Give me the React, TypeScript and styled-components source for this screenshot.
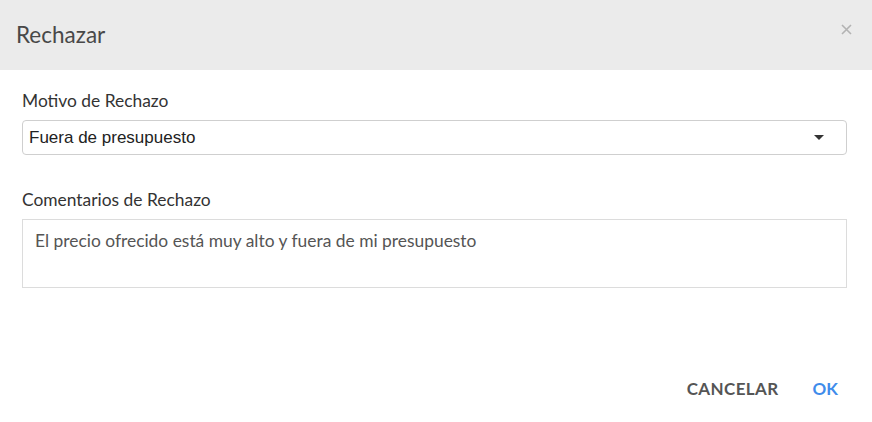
import React from "react";
import styled, { createGlobalStyle } from "styled-components";

const GlobalStyle = createGlobalStyle`
  html, body {
    margin: 0;
    padding: 0;
    background: #ffffff;
  }
  body {
    font-family: Lato, "Open Sans", sans-serif;
  }
`;

const Dialog = styled.div`
  width: 872px;
  height: 422px;
  display: flex;
  flex-flow: column nowrap;
  background: #ffffff;
`;

const Header = styled.div`
  height: 70px;
  display: flex;
  align-items: center;
  justify-content: space-between;
  padding: 0 20px 0 16px;
  background: #ebebeb;
  box-sizing: border-box;
`;

const Title = styled.h2`
  margin: -2px 0 0;
  font-family: Lato, sans-serif;
  font-size: 22.5px;
  font-weight: 400;
  color: #484848;
`;

const Close = styled.button`
  border: 0;
  background: none;
  padding: 0;
  margin-top: -12px;
  display: flex;
  cursor: pointer;
`;

const Body = styled.div`
  flex: 1;
  display: flex;
  flex-flow: column nowrap;
  padding: 21px 25px 0 22px;
`;

const Field = styled.div`
  display: flex;
  flex-flow: column nowrap;
  gap: 9px;
  margin-bottom: 34px;

  & + & {
    margin-top: 1px;
  }
`;

const Label = styled.label`
  font-family: Lato, sans-serif;
  font-size: 17.4px;
  color: #333333;
  line-height: 20px;
`;

const Select = styled.div`
  height: 35px;
  box-sizing: border-box;
  border: 1px solid #cfcfcf;
  border-radius: 4px;
  display: flex;
  align-items: center;
  justify-content: space-between;
  padding: 0 22px 0 6px;
  font-family: "Liberation Sans", Arial, sans-serif;
  font-size: 17px;
  color: #222222;
`;

const Caret = styled.span`
  width: 0;
  height: 0;
  border-left: 5px solid transparent;
  border-right: 5px solid transparent;
  border-top: 5px solid #333333;
`;

const TextArea = styled.div`
  height: 69px;
  box-sizing: border-box;
  border: 1px solid #dcdcdc;
  padding: 11px 12px;
  font-family: Lato, sans-serif;
  font-size: 17.4px;
  color: #555555;
  line-height: 20px;
`;

const Footer = styled.div`
  display: flex;
  justify-content: flex-end;
  align-items: center;
  gap: 34px;
  padding: 0 34px 0 0;
  height: 60px;
  margin-bottom: 4px;
`;

const Action = styled.button<{ $primary?: boolean }>`
  border: 0;
  background: none;
  padding: 0;
  font-family: Lato, sans-serif;
  font-size: 17px;
  font-weight: 700;
  letter-spacing: ${(p) => (p.$primary ? "0" : "0.4px")};
  color: ${(p) => (p.$primary ? "#3f8ceb" : "#555555")};
  cursor: pointer;
`;

export default function App() {
  return (
    <>
      <GlobalStyle />
      <Dialog>
        <Header>
          <Title>Rechazar</Title>
          <Close aria-label="Cerrar">
            <svg width="11" height="11" viewBox="0 0 11 11">
              <path d="M1 1L10 10M10 1L1 10" stroke="#b3b3b3" strokeWidth="1.6" />
            </svg>
          </Close>
        </Header>
        <Body>
          <Field>
            <Label>Motivo de Rechazo</Label>
            <Select>
              Fuera de presupuesto
              <Caret />
            </Select>
          </Field>
          <Field>
            <Label>Comentarios de Rechazo</Label>
            <TextArea>El precio ofrecido está muy alto y fuera de mi presupuesto</TextArea>
          </Field>
        </Body>
        <Footer>
          <Action>CANCELAR</Action>
          <Action $primary>OK</Action>
        </Footer>
      </Dialog>
    </>
  );
}
